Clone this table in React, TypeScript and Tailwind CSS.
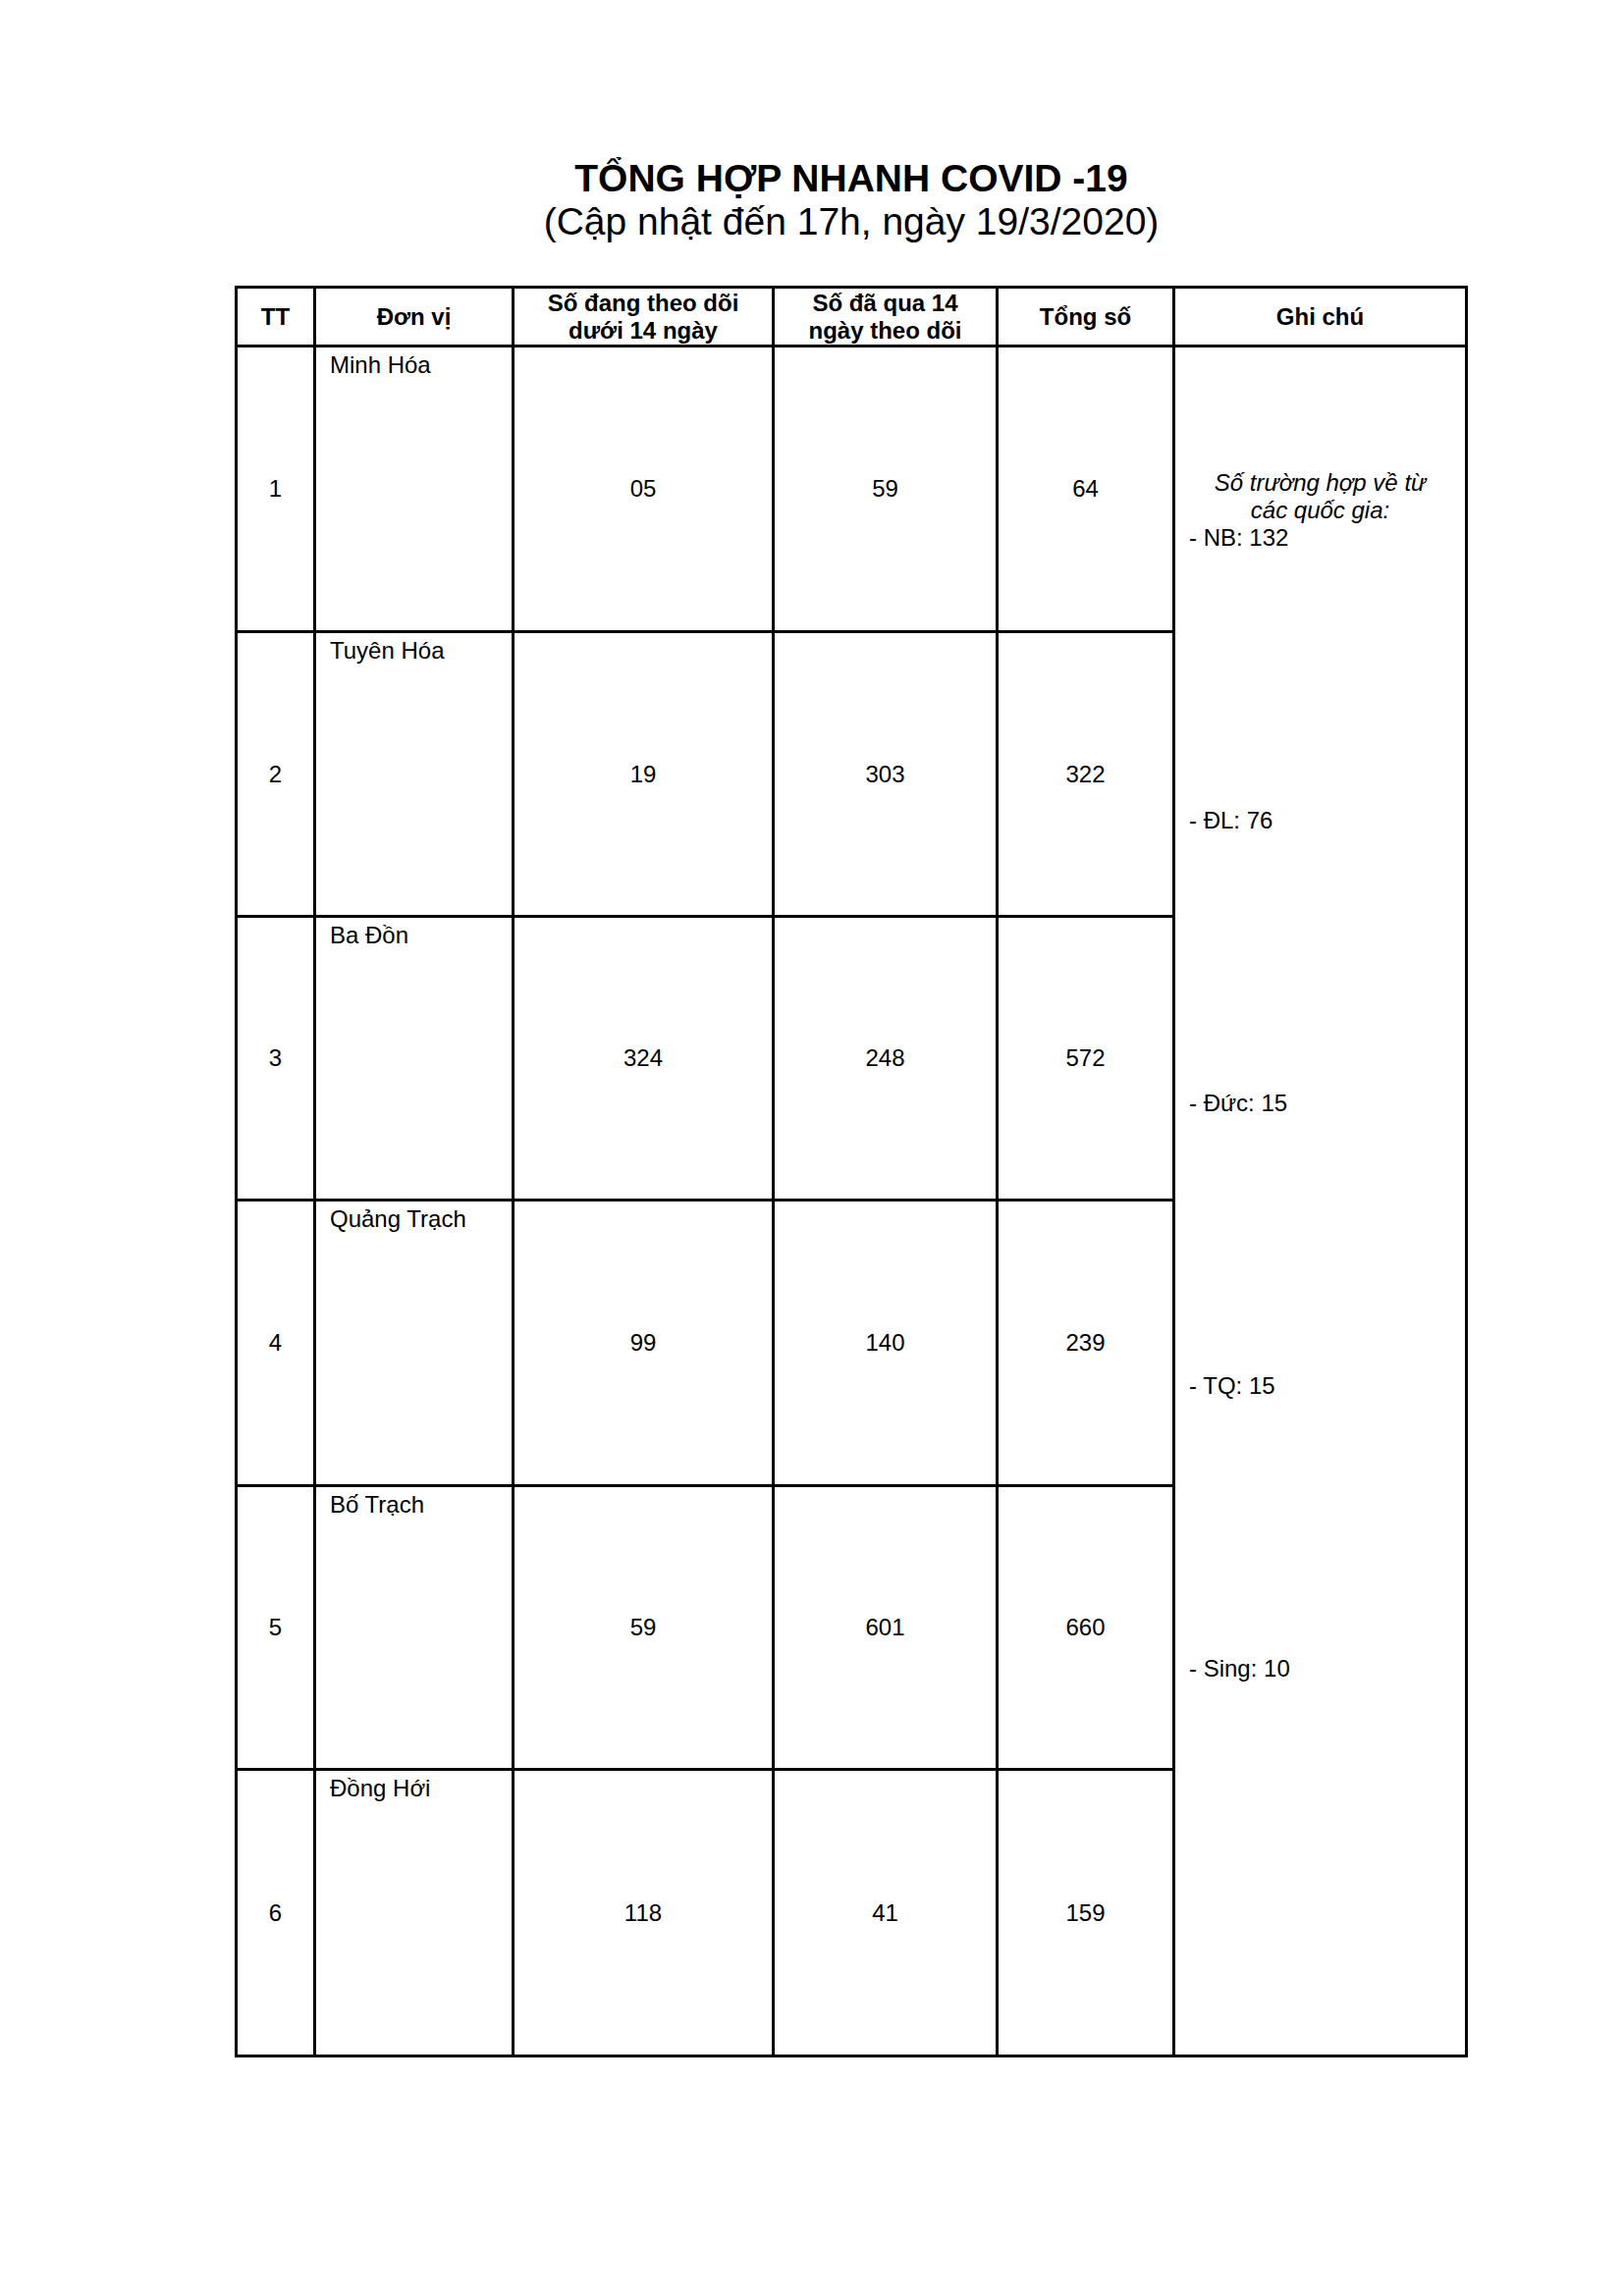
const rows = [
  { tt: '1', name: 'Minh Hóa', under: '05', over: '59', total: '64' },
  { tt: '2', name: 'Tuyên Hóa', under: '19', over: '303', total: '322' },
  { tt: '3', name: 'Ba Đồn', under: '324', over: '248', total: '572' },
  { tt: '4', name: 'Quảng Trạch', under: '99', over: '140', total: '239' },
  { tt: '5', name: 'Bố Trạch', under: '59', over: '601', total: '660' },
  { tt: '6', name: 'Đồng Hới', under: '118', over: '41', total: '159' },
];

const cell = 'border-r-[3px] border-b-[3px] border-black';

export default function App() {
  return (
    <div className="min-h-[2339px] w-[1654px] bg-white text-black font-['Liberation_Sans',Arial,sans-serif] pt-[160px]">
      <div className="ml-[239px] w-[1256px] text-center text-[39px] leading-[44px]">
        <h1 className="font-bold">TỔNG HỢP NHANH COVID -19</h1>
        <p>(Cập nhật đến 17h, ngày 19/3/2020)</p>
      </div>

      <div className="mt-[43px] ml-[239px] w-[1256px] grid grid-cols-[80px_202px_265px_228px_180px_298px] grid-rows-[60px_291px_290px_289px_291px_289px_292px] border-l-[3px] border-t-[3px] border-black text-[24px] leading-[28px]">
        {/* Header */}
        {['TT', 'Đơn vị', 'Số đang theo dõi dưới 14 ngày', 'Số đã qua 14 ngày theo dõi', 'Tổng số', 'Ghi chú'].map((h, i) => (
          <div key={i} className={`${cell} flex items-center justify-center text-center font-bold`}>
            {i === 2 ? (
              <span>Số đang theo dõi<br />dưới 14 ngày</span>
            ) : i === 3 ? (
              <span>Số đã qua 14<br />ngày theo dõi</span>
            ) : (
              h
            )}
          </div>
        ))}

        {rows.map((r, idx) => (
          <div key={r.tt} className="contents">
            <div className={`${cell} flex items-center justify-center`}>{r.tt}</div>
            <div className={`${cell} pt-[4px] pl-[14px]`}>{r.name}</div>
            <div className={`${cell} flex items-center justify-center`}>{r.under}</div>
            <div className={`${cell} flex items-center justify-center`}>{r.over}</div>
            <div className={`${cell} flex items-center justify-center`}>{r.total}</div>
            {idx === 0 && (
              <div className={`${cell} row-span-6 pt-[124px] pl-[14px]`}>
                <p className="italic text-center pr-[14px]">
                  Số trường hợp về từ<br />các quốc gia:
                </p>
                <div className="flex flex-col gap-[260px]">
                  <p>- NB: 132</p>
                  <p>- ĐL: 76</p>
                  <p>- Đức: 15</p>
                  <p>- TQ: 15</p>
                  <p>- Sing: 10</p>
                </div>
              </div>
            )}
          </div>
        ))}
      </div>
    </div>
  );
}
